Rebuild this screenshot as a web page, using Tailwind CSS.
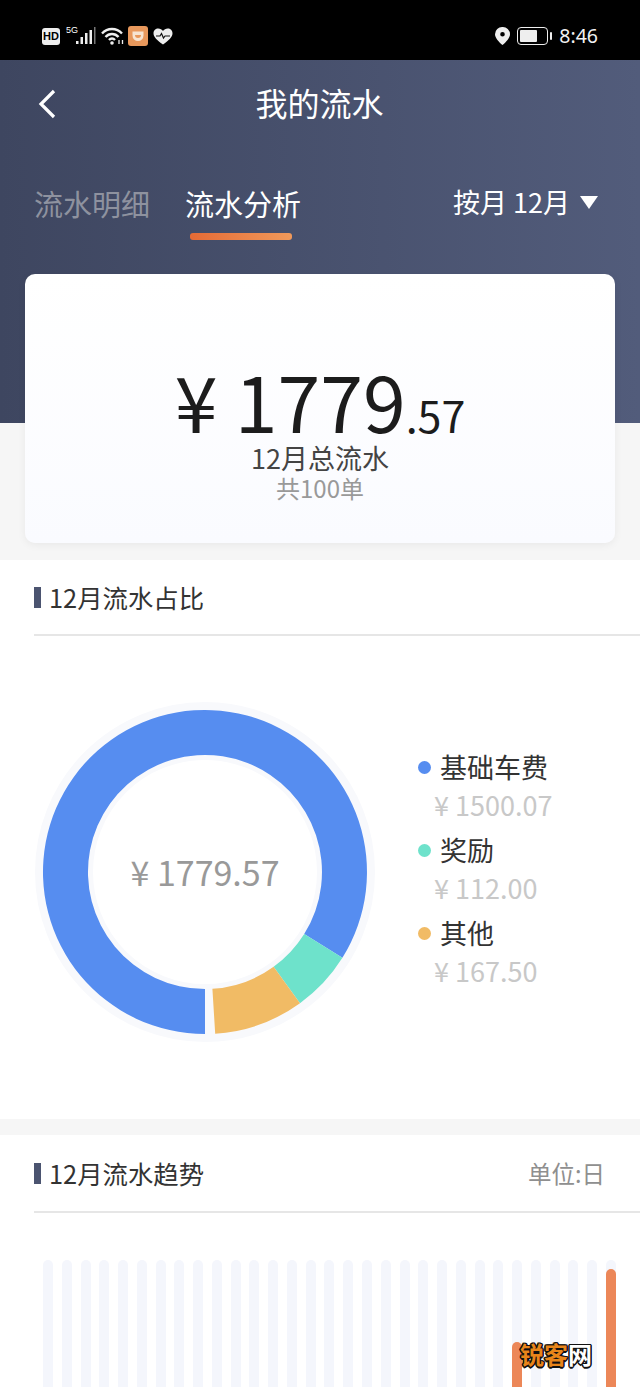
<!DOCTYPE html>
<html lang="zh-CN">
<head>
  <meta charset="UTF-8">
  <title>我的流水</title>
  <script src="https://cdn.jsdelivr.net/npm/@tailwindcss/browser@4"></script>
</head>
<body class="bg-[#f6f6f6] font-['Noto_Sans_CJK_SC','Noto_Sans',sans-serif]">
<div class="relative w-[640px] h-[1387px] overflow-hidden">

  <!-- status bar -->
  <div class="h-[60px] bg-black flex items-center justify-between pl-[42px] pr-[42px] pt-[12px] text-white">
    <div class="flex items-center">
      <div class="w-[18px] h-[17px] rounded-[3px] bg-[#eeeeee] text-black text-[11px] font-bold leading-[17px] text-center font-['Liberation_Sans',sans-serif]">HD</div>
      <div class="relative w-[30px] h-[18px] ml-[6px]">
        <span class="absolute left-0 top-[-2px] text-[9px] leading-[10px] font-['Liberation_Sans',sans-serif]">5G</span>
        <svg class="absolute left-[10px] top-0" width="20" height="18" viewBox="0 0 20 18" fill="#eeeeee">
          <rect x="0" y="14" width="2.5" height="3"/><rect x="4.5" y="10" width="2.5" height="7"/><rect x="9" y="6" width="2.5" height="11"/><rect x="13.5" y="3" width="2.5" height="14"/><rect x="18" y="0" width="1.5" height="17" fill="#777777"/>
        </svg>
      </div>
      <svg class="ml-[5px]" width="24" height="18" viewBox="0 0 24 18" fill="none" stroke="#eeeeee" stroke-width="2.400">
        <path d="M1 6.500C6.500 .5 15.500 .5 21 6.500"/><path d="M4.500 10C8 6 14 6 17.500 10"/><path d="M8 13c1.800-2 4.200-2 6 0"/>
        <circle cx="11" cy="16" r="1.800" fill="#eeeeee" stroke="none"/>
        <path d="M18 13v4M21.500 13v4" stroke-width="1.300"/>
      </svg>
      <div class="w-[20px] h-[20px] ml-[3px] rounded-[3px] bg-[#e8985c] flex items-center justify-center">
        <svg width="14" height="12" viewBox="0 0 14 12" fill="none"><path d="M1.500 1.500h11v4a5.500 5.500 0 0 1-11 0z" fill="#f7e4d2"/><path d="M4 5a3 3 0 0 0 6 0z" fill="#e8985c"/></svg>
      </div>
      <svg class="ml-[5px]" width="20" height="17" viewBox="0 0 20 17">
        <path d="M10 16.500C4 12 .5 9 .5 5.200 .5 2.500 2.700.5 5.200.5 7.200.5 9 1.500 10 3 11 1.500 12.800.5 14.800.5 17.300.5 19.500 2.500 19.500 5.200 19.500 9 16 12 10 16.500z" fill="#eeeeee"/>
        <path d="M3 8h4l1.500-2.500 2 4.500 1.500-2h5" fill="none" stroke="#111111" stroke-width="1.200"/>
      </svg>
    </div>
    <div class="flex items-center">
      <svg width="15" height="18" viewBox="0 0 15 18"><path fill-rule="evenodd" d="M7.500 0A7.300 7.300 0 0 1 15 7.200C15 11 11 15 7.500 18 4 15 0 11 0 7.200A7.300 7.300 0 0 1 7.500 0zm0 5a2.300 2.300 0 1 0 0 4.600 2.300 2.300 0 0 0 0-4.600z" fill="#eeeeee"/></svg>
      <div class="ml-[7px] w-[31px] h-[18px] rounded-[4px] border-[1.500px] border-[#eeeeee] p-[2px]">
        <div class="w-[17px] h-full rounded-[1px] bg-[#eeeeee]"></div>
      </div>
      <div class="ml-[2px] w-[2px] h-[8px] bg-[#eeeeee] rounded-full"></div>
      <span class="ml-[7px] text-[19.5px] leading-[24px] text-[#f2f2f2] font-['Noto_Sans',sans-serif]">8:46</span>
    </div>
  </div>

  <!-- header -->
  <div class="h-[363px] bg-linear-to-r from-[#3e4660] to-[#525c7b] pl-[34px] pr-[35px]">
    <div class="relative h-[88px] flex items-center justify-center">
      <svg class="absolute left-[3px] top-[29px]" width="20" height="30" viewBox="0 0 20 30" fill="none" stroke="#ffffff" stroke-width="3.200"><path d="M17 2 4 15l13 13"/></svg>
      <span class="text-[32px] leading-[44px] -mt-[5px] text-white">我的流水</span>
    </div>
    <div class="flex items-start justify-between pt-[31px] pr-[7px]">
      <div class="flex gap-[35px]">
        <span class="text-[29px] leading-[48px] text-[#8e929f]">流水明细</span>
        <div class="flex flex-col">
          <span class="text-[29px] leading-[48px] text-white">流水分析</span>
          <div class="mt-[6px] ml-[5px] w-[102px] h-[7px] rounded-[3px] bg-linear-to-r from-[#e56a35] to-[#f0995a]"></div>
        </div>
      </div>
      <div class="flex items-center gap-[10px] h-[44px]">
        <span class="text-[27px] leading-[44px] mt-[2px] text-white">按月 12月</span>
        <div class="w-0 h-0 border-x-[9px] border-x-transparent border-t-[13px] border-t-white mt-[2px]"></div>
      </div>
    </div>
  </div>

  <!-- total card -->
  <div class="relative -mt-[149px] mx-[25px] h-[269px] rounded-[10px] bg-linear-to-b from-white to-[#fafbff] shadow-[0_2px_8px_rgba(0,0,0,0.06)] flex flex-col items-center pt-[92px]">
    <div class="flex items-baseline h-[68px] text-[#1c1c1c]">
      <span class="text-[77px] leading-[68px]">¥ 1779</span><span class="text-[43px] leading-[68px]">.57</span>
    </div>
    <div class="text-[27px] leading-[32px] text-[#444444] mt-[8px]">12月总流水</div>
    <div class="text-[24px] leading-[30px] -mt-[1px] text-[#999999]">共100单</div>
  </div>

  <!-- share section -->
  <section class="mt-[17px] h-[559px] bg-white pl-[34px]">
    <div class="h-[76px] border-b-2 border-[#e6e6e6] flex items-center gap-[8px]">
      <div class="w-[7px] h-[21px] bg-[#4b5470]"></div>
      <span class="text-[25.4px] leading-[34px] text-[#333333]">12月流水占比</span>
    </div>
    <div class="flex items-start">
      <div class="relative w-[350px] h-[350px] ml-[-4px] mt-[61px] shrink-0">
        <svg width="350" height="350" viewBox="0 0 350 350">
          <circle cx="175" cy="175" r="141" fill="none" stroke="#f8f9fc" stroke-width="58"/>
          <path d="M175 337A162 162 0 1 1 312.400 260.800L274.200 237A117 117 0 1 0 175 292Z" fill="#568df0"/>
          <path d="M312.400 260.800A162 162 0 0 1 270 306.200L243.600 269.800A117 117 0 0 0 274.200 237Z" fill="#6ee2cb"/>
          <path d="M270 306.200A162 162 0 0 1 185.200 336.700L182.400 291.800A117 117 0 0 0 243.600 269.800Z" fill="#f1bb65"/>
        </svg>
        <div class="absolute inset-0 flex items-center justify-center pb-[2px] text-[34px] text-[#999999]">¥ 1779.57</div>
      </div>
      <div class="ml-[38px] mt-[112px] flex flex-col gap-[7px]">
        <div>
          <div class="flex items-center gap-[9px] h-[38px]"><span class="w-[13px] h-[13px] rounded-full bg-[#568df0]"></span><span class="text-[27px] leading-[38px] text-[#333333]">基础车费</span></div>
          <div class="pl-[16px] h-[38px] text-[27px] leading-[38px] text-[#c8c8c8]">¥ 1500.07</div>
        </div>
        <div>
          <div class="flex items-center gap-[9px] h-[38px]"><span class="w-[13px] h-[13px] rounded-full bg-[#6ee2cb]"></span><span class="text-[27px] leading-[38px] text-[#333333]">奖励</span></div>
          <div class="pl-[16px] h-[38px] text-[27px] leading-[38px] text-[#c8c8c8]">¥ 112.00</div>
        </div>
        <div>
          <div class="flex items-center gap-[9px] h-[38px]"><span class="w-[13px] h-[13px] rounded-full bg-[#f1bb65]"></span><span class="text-[27px] leading-[38px] text-[#333333]">其他</span></div>
          <div class="pl-[16px] h-[38px] text-[27px] leading-[38px] text-[#c8c8c8]">¥ 167.50</div>
        </div>
      </div>
    </div>
  </section>

  <!-- trend section -->
  <section class="mt-[16px] h-[300px] bg-white pl-[34px]">
    <div class="h-[78px] border-b-2 border-[#e6e6e6] flex items-center gap-[8px] pr-[35px]">
      <div class="w-[7px] h-[21px] bg-[#4b5470]"></div>
      <span class="text-[25.4px] leading-[34px] text-[#333333]">12月流水趋势</span>
      <span class="ml-auto text-[23.5px] leading-[34px] text-[#8f8f8f]">单位:日</span>
    </div>
    <div id="bars" class="flex justify-between w-[573px] ml-[9px] mt-[47px]"></div>
  </section>

  <!-- watermark -->
  <div class="absolute left-[520px] top-[1338px] text-[24px] leading-[32px] font-bold [text-shadow:-1.500px_0_#111,1.500px_0_#111,0_-1.500px_#111,0_1.500px_#111,-1px_-1px_#111,1px_1px_#111,-1px_1px_#111,1px_-1px_#111]">
    <span class="text-[#e8851a]">锐客</span><span class="text-white">网</span>
  </div>
</div>

<script>
  // day index -> top offset of the orange bar, px from the top of the track
  const earnings = { 25: 82, 30: 9 };
  let html = '';
  for (let i = 0; i < 31; i++) {
    const top = earnings[i];
    html += `<div class="relative w-[10px] h-[200px] rounded-full bg-[#f4f6fc] overflow-hidden">`;
    if (top !== undefined) {
      html += `<div class="absolute left-0 right-0 bottom-0 rounded-t-full bg-[#ec8758]" style="top:${top}px"></div>`;
    }
    html += `</div>`;
  }
  document.getElementById('bars').innerHTML = html;
</script>
</body>
</html>
